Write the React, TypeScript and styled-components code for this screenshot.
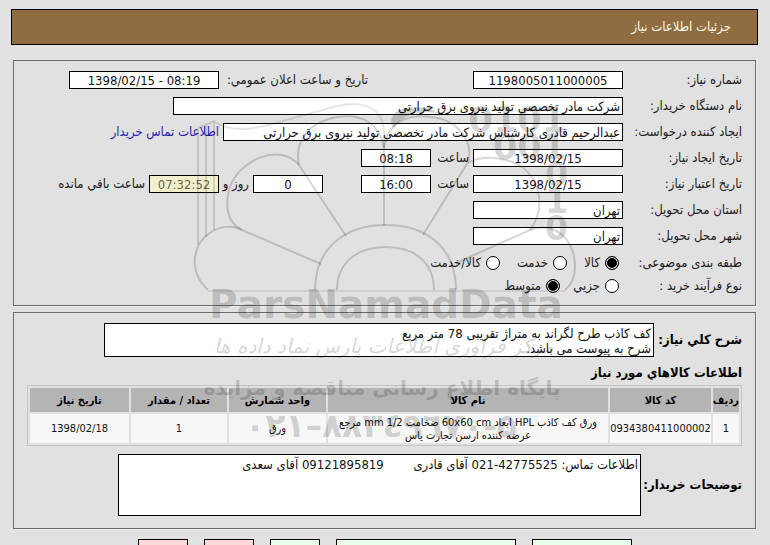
import React from 'react';
import styled, { createGlobalStyle, css } from 'styled-components';

const ui = '"DejaVu Sans Condensed", "DejaVu Sans", "Noto Sans", sans-serif';
const labelWidth = '119px';

const GlobalStyle = createGlobalStyle`
  *, *::before, *::after { box-sizing: border-box; }
  html, body, #root { height: 100%; }
  body {
    margin: 0;
    overflow: hidden;
    background: #e1e1e1;
    color: #222;
    font: 13px/18px ${ui};
  }
  input, textarea, button { font-family: inherit; }
`;

const Page = styled.main`
  position: relative;
  padding: 9px 12px 0 11px;
`;

const TitleBar = styled.header`
  display: flex;
  align-items: center;
  height: 36px;
  padding: 0 26px;
  border: 1px solid #000;
  background: #8f6d40;
`;

const Title = styled.h1`
  margin: 0;
  font-size: 13px;
  font-weight: 400;
  color: #fff8e6;
`;

const Panel = styled.section<{ $gap: number; $bottom: number }>`
  margin: ${p => p.$gap}px 2px 0 2px;
  padding: 10px 13px ${p => p.$bottom}px;
  border: 1px solid #6c6c6c;
  box-shadow: 1px 1px 0 #f0f0f0;
`;

const Row = styled.div`
  display: flex;
  align-items: center;
  gap: 4px;
  height: 18px;
  margin-bottom: 8px;
  white-space: nowrap;
`;

const Label = styled.label`
  flex: none;
  width: calc(${labelWidth} - 4px);
`;

const Caption = styled.label<{ $width: number; $before?: number }>`
  flex: none;
  width: ${p => p.$width}px;
  margin-inline-start: ${p => p.$before ?? 0}px;
`;

const boxed = css`
  border: 1px solid #000;
  border-radius: 0;
  background: #fff;
  color: #111;
  outline: none;
`;

const Field = styled.input<{ $width: number; $center?: boolean; $before?: number; $muted?: boolean }>`
  ${boxed}
  flex: 0 1 ${p => p.$width}px;
  min-width: 0;
  height: 18px;
  padding: 0 2px;
  margin-inline-start: ${p => p.$before ?? 0}px;
  font-size: 13px;
  line-height: 16px;
  text-align: ${p => (p.$center ? 'center' : 'start')};
  ${p => p.$muted && css`
    background: #f2f0cc;
    color: #66664f;
  `}
`;

const ContactLink = styled.a`
  color: #2a1fb0;
  text-decoration: none;
`;

const RadioRow = styled.fieldset`
  display: flex;
  align-items: center;
  height: 20px;
  margin: 0 0 3px;
  padding: 0;
  border: 0;
  white-space: nowrap;
`;

const RadioLegend = styled.span`
  flex: none;
  width: calc(${labelWidth} + 4px);
`;

const Option = styled.label<{ $width: number }>`
  display: flex;
  align-items: center;
  gap: 5px;
  width: ${p => p.$width}px;
`;

const Radio = styled.input`
  appearance: none;
  flex: none;
  width: 14px;
  height: 14px;
  margin: 0;
  border: 1px solid #000;
  border-radius: 50%;
  background: #fff;
  &:checked {
    background: #000;
    box-shadow: inset 0 0 0 1px #fff;
  }
`;

const AreaRow = styled.div`
  display: flex;
  align-items: center;
  gap: 4px;
`;

const BoldLabel = styled.label<{ $width: number }>`
  flex: none;
  width: ${p => p.$width}px;
  font-weight: 700;
  color: #000;
  white-space: nowrap;
`;

const Area = styled.textarea<{ $width: number; $height: number }>`
  ${boxed}
  display: block;
  flex: 0 1 ${p => p.$width}px;
  min-width: 0;
  height: ${p => p.$height}px;
  padding: 2px;
  font-size: 13px;
  line-height: 15px;
  resize: none;
  overflow: hidden;
`;

const SubTitle = styled.h2`
  margin: 7px 0 3px;
  font-size: 13px;
  line-height: 18px;
  font-weight: 700;
  color: #000;
`;

const Items = styled.table`
  width: 100%;
  margin-bottom: 8px;
  border: 1px solid #c4c4c4;
  border-spacing: 2px;
  table-layout: fixed;
  font-size: 11px;
  line-height: 13px;
  text-align: center;
`;

const Head = styled.th<{ $width?: number }>`
  width: ${p => (p.$width ? `${p.$width}px` : 'auto')};
  height: 24px;
  padding: 0;
  background: #b4b4b4;
  color: #000;
  font-weight: 700;
  white-space: nowrap;
`;

const Cell = styled.td`
  height: 29px;
  padding: 0;
  background: #f7f7f7;
  color: #111;
`;

const Actions = styled.footer`
  display: flex;
  justify-content: center;
  gap: 16px;
  margin-top: 10px;
`;

const Action = styled.button<{ $width: number; $tone: string }>`
  flex: 0 1 ${p => p.$width}px;
  height: 24px;
  border: 1px solid #000;
  background: ${p => p.$tone};
`;

const Overlay = styled.svg`
  position: absolute;
  top: 90px;
  left: 190px;
  pointer-events: none;
`;

function Watermark() {
  return (
    <Overlay width="400" height="360" viewBox="190 90 400 360" aria-hidden="true" direction="ltr">
      <g fill="none" stroke="#000" strokeOpacity="0.16" strokeWidth="2">
        <path d="M315 290C315 248 345 225 386 225S456 248 456 290" />
        <path d="M337 290C337 262 358 247 386 247S434 262 434 290" />
        <path d="M208 291H565" strokeWidth="1" />
        <path d="M208 290C188 272 192 244 211 232C220 226 233 225 242 230L321 264" />
        <path d="M242 230C225 222 226 202 229 190C237 160 280 142 299 165L346 236" />
        <path d="M299 165C294 142 308 122 337 117C362 113 380 124 384 148V225" />
        <path d="M384 148C388 120 410 114 430 117C459 119 474 143 468 162L423 235" />
        <path d="M468 163C480 156 500 156 517 164C544 179 544 212 530 230L456 263" />
        <path d="M530 230C548 223 566 231 573 252C577 268 575 282 565 290" />
        <path d="M215 122C232 133 254 129 272 124L337 106C363 100 384 108 384 133V148" strokeOpacity="0.1" />
        <path d="M198 128L215 121M198 128V245M206 124V237M214 121V230" strokeOpacity="0.13" />
      </g>
      <g fill="#000" fillOpacity="0.18" fontWeight="700" fontFamily='"DejaVu Sans", sans-serif'>
        <path d="M391 124C391 108 408 106 428 108L440 114C424 110 404 112 394 128Z" />
        <text x="566" y="132" fontSize="35" textAnchor="end">0101</text>
        <text x="566" y="159" fontSize="35" textAnchor="end">001</text>
        <text x="568" y="186" fontSize="33" textAnchor="end">0</text>
        <text x="568" y="213" fontSize="33" textAnchor="end">1</text>
        <text x="568" y="240" fontSize="33" textAnchor="end">0</text>
        <text x="386" y="318" fontSize="39" textAnchor="middle">ParsNamadData</text>
        <text x="384" y="353" fontSize="20" fontWeight="400" fontStyle="italic" textAnchor="middle">مرکز فرآوری اطلاعات پارس نماد داده ها</text>
        <text x="382" y="395" fontSize="20" textAnchor="middle">پایگاه اطلاع رسانی مناقصه و مزایده</text>
        <text x="381" y="437" fontSize="33" textAnchor="middle">۰۲۱–۸۸۳٤۹٦۷۰-۵</text>
      </g>
    </Overlay>
  );
}

export default function App() {
  return (
    <>
      <GlobalStyle />
      <Page dir="rtl" lang="fa">
        <TitleBar><Title>جزئیات اطلاعات نیاز</Title></TitleBar>

        <Panel $gap={15} $bottom={6}>
          <Row>
            <Label htmlFor="number">شماره نیاز:</Label>
            <Field id="number" $width={150} $center readOnly value="1198005011000005" />
            <Caption htmlFor="announced" $width={145} $before={101}>تاریخ و ساعت اعلان عمومي:</Caption>
            <Field id="announced" $width={150} $center readOnly dir="ltr" value="1398/02/15 - 08:19" />
          </Row>
          <Row>
            <Label htmlFor="buyer">نام دستگاه خریدار:</Label>
            <Field id="buyer" $width={450} readOnly value="شرکت مادر تخصصی تولید نیروی برق حرارتی" />
          </Row>
          <Row>
            <Label htmlFor="creator">ایجاد کننده درخواست:</Label>
            <Field id="creator" $width={400} readOnly value="عبدالرحیم قادری کارشناس شرکت مادر تخصصی تولید نیروی برق حرارتی" />
            <ContactLink href="#contact">اطلاعات تماس خریدار</ContactLink>
          </Row>
          <Row>
            <Label htmlFor="created">تاریخ ایجاد نیاز:</Label>
            <Field id="created" $width={150} $center readOnly dir="ltr" value="1398/02/15" />
            <Caption htmlFor="createdAt" $width={34}>ساعت</Caption>
            <Field id="createdAt" $width={70} $center readOnly value="08:18" />
          </Row>
          <Row>
            <Label htmlFor="expires">تاریخ اعتبار نیاز:</Label>
            <Field id="expires" $width={150} $center readOnly dir="ltr" value="1398/02/15" />
            <Caption htmlFor="expiresAt" $width={34}>ساعت</Caption>
            <Field id="expiresAt" $width={70} $center readOnly value="16:00" />
            <Field id="days" $width={70} $before={34} $center readOnly value="0" />
            <Caption htmlFor="days" $width={26}>روز و</Caption>
            <Field id="left" $width={70} $center $muted readOnly value="07:32:52" />
            <label htmlFor="left">ساعت باقي مانده</label>
          </Row>
          <Row>
            <Label htmlFor="province">استان محل تحویل:</Label>
            <Field id="province" $width={150} readOnly value="تهران" />
          </Row>
          <Row>
            <Label htmlFor="city">شهر محل تحویل:</Label>
            <Field id="city" $width={150} readOnly value="تهران" />
          </Row>
          <RadioRow>
            <RadioLegend>طبقه بندی موضوعی:</RadioLegend>
            <Option $width={52}><Radio type="radio" name="kind" defaultChecked />کالا</Option>
            <Option $width={67}><Radio type="radio" name="kind" />خدمت</Option>
            <Option $width={80}><Radio type="radio" name="kind" />کالا/خدمت</Option>
          </RadioRow>
          <RadioRow>
            <RadioLegend>نوع فرآیند خرید :</RadioLegend>
            <Option $width={59}><Radio type="radio" name="size" />جزیي</Option>
            <Option $width={60}><Radio type="radio" name="size" defaultChecked />متوسط</Option>
          </RadioRow>
        </Panel>

        <Panel $gap={6} $bottom={12}>
          <AreaRow>
            <BoldLabel htmlFor="summary" $width={84}>شرح کلي نیاز:</BoldLabel>
            <Area id="summary" $width={550} $height={34} readOnly value={'کف کاذب طرح لگراند به متراژ تقریبی 78 متر مربع\nشرح به پیوست می باشد.'} />
          </AreaRow>
          <SubTitle>اطلاعات کالاهاي مورد نیاز</SubTitle>
          <Items>
            <thead>
              <tr>
                <Head $width={26}>ردیف</Head>
                <Head $width={101}>کد کالا</Head>
                <Head>نام کالا</Head>
                <Head $width={97}>واحد شمارش</Head>
                <Head $width={96}>تعداد / مقدار</Head>
                <Head $width={99}>تاریخ نیاز</Head>
              </tr>
            </thead>
            <tbody>
              <tr>
                <Cell>1</Cell>
                <Cell>0934380411000002</Cell>
                <Cell>ورق کف کاذب HPL ابعاد 60x60 cm ضخامت 1/2 mm مرجع<br />عرضه کننده ارسن تجارت یاس</Cell>
                <Cell>ورق</Cell>
                <Cell>1</Cell>
                <Cell><bdi dir="ltr">1398/02/18</bdi></Cell>
              </tr>
            </tbody>
          </Items>
          <AreaRow>
            <BoldLabel htmlFor="notes" $width={97}>توضیحات خریدار:</BoldLabel>
            <Area id="notes" $width={523} $height={62} readOnly value={'اطلاعات تماس: 42775525-021 آقای قادری        09121895819 آقای سعدی'} />
          </AreaRow>
        </Panel>

        <Actions>
          <Action type="button" $width={100} $tone="#eaffea" />
          <Action type="button" $width={180} $tone="#eaffea" />
          <Action type="button" $width={50} $tone="#eaffea" />
          <Action type="button" $width={50} $tone="#ffd9d9" />
          <Action type="button" $width={50} $tone="#ffd9d9" />
        </Actions>
        <Watermark />
      </Page>
    </>
  );
}
